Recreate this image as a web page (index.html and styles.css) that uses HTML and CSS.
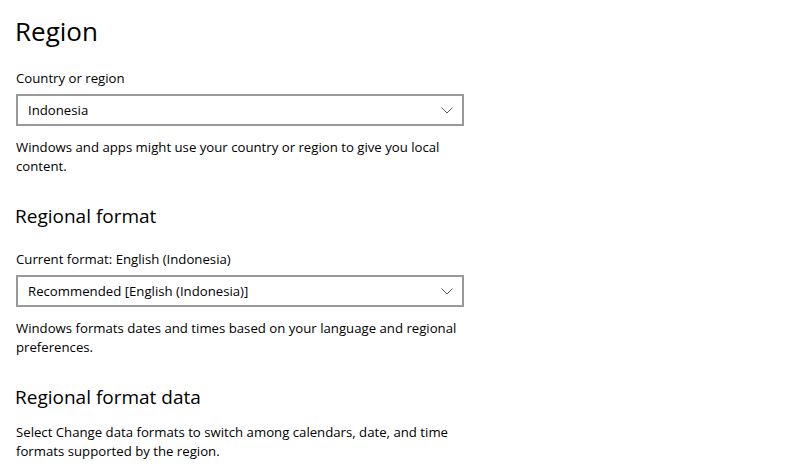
FILE: index.html
```html
<!DOCTYPE html>
<html>
<head>
<meta charset="utf-8">
<link rel="stylesheet" href="styles.css">
</head>
<body>
<main class="page">
  <h1 class="title">Region</h1>
  <section class="group first">
    <div class="label">Country or region</div>
    <div class="select">
      <span class="select-text">Indonesia</span>
      <svg class="chevron" width="12" height="7" viewBox="0 0 12 7"><path d="M0.5 0.5 L6 6 L11.5 0.5" fill="none" stroke="#5c5c5c" stroke-width="1"/></svg>
    </div>
    <p class="desc">Windows and apps might use your country or region to give you local content.</p>
  </section>
  <h2 class="subtitle">Regional format</h2>
  <section class="group">
    <div class="label">Current format: English (Indonesia)</div>
    <div class="select">
      <span class="select-text">Recommended [English (Indonesia)]</span>
      <svg class="chevron" width="12" height="7" viewBox="0 0 12 7"><path d="M0.5 0.5 L6 6 L11.5 0.5" fill="none" stroke="#5c5c5c" stroke-width="1"/></svg>
    </div>
    <p class="desc">Windows formats dates and times based on your language and regional preferences.</p>
  </section>
  <h2 class="subtitle">Regional format data</h2>
  <p class="desc data">Select Change data formats to switch among calendars, date, and time formats supported by the region.</p>
</main>
</body>
</html>
```
FILE: styles.css
```css
html, body {
  margin: 0;
  padding: 0;
  background: #ffffff;
}
body {
  font-family: "Open Sans", "Noto Sans", "Liberation Sans", sans-serif;
  color: #000000;
}
.page {
  padding: 12px 0 0 16px;
  width: 448px;
}
.title {
  margin: 0;
  font-size: 26px;
  font-weight: 400;
  line-height: 38px;
  margin-left: -1px;
}
.group {
  display: flex;
  flex-direction: column;
}
.group.first {
  margin-top: 18px;
}
.label {
  font-size: 13.2px;
  line-height: 20px;
}
.select {
  margin-top: 6px;
  height: 28px;
  border: 2px solid #999999;
  display: flex;
  align-items: center;
  justify-content: space-between;
  padding: 0 9px 0 10px;
}
.select-text {
  font-size: 13.2px;
}
.chevron {
  display: block;
}
.desc {
  margin: 12px 0 0 0;
  font-size: 13.2px;
  line-height: 19px;
}
.subtitle {
  margin: 26px 0 0 -1px;
  font-size: 19px;
  font-weight: 400;
  line-height: 28px;
}
.subtitle + .group {
  margin-top: 19px;
}
.desc.data {
  margin-top: 12px;
}
```
